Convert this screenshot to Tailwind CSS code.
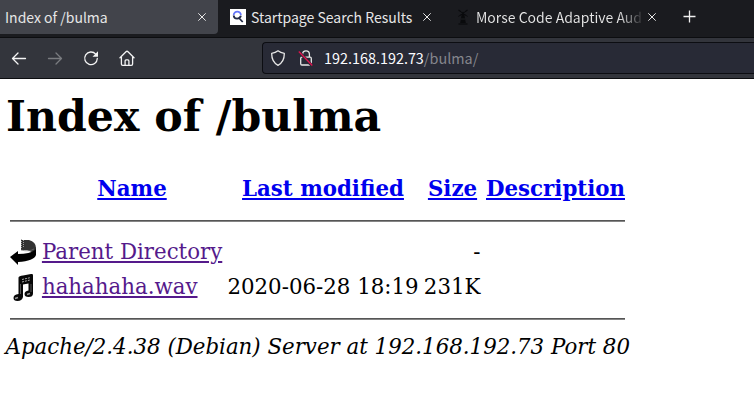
<!DOCTYPE html>
<html lang="en">
<head>
<meta charset="utf-8">
<title>Index of /bulma</title>
<script src="https://cdn.jsdelivr.net/npm/@tailwindcss/browser@4"></script>
</head>
<body class="w-[754px] h-[404px] overflow-hidden bg-white text-black">
<header class="font-['Noto_Sans_CJK_JP','Noto_Sans',sans-serif] text-[14px] leading-[22px] text-[#e6e6e6]">
  <div class="flex h-[37px] bg-[#1a1b1f]">
    <div class="flex h-[34px] w-[218px] items-center rounded-br bg-[#42444b] pb-px pl-[5px] pr-[12px]">
      <span class="flex-1 whitespace-nowrap">Index of /bulma</span>
      <svg class="size-2" viewBox="0 0 8 8" fill="none" stroke="#e6e6e6" stroke-width="1"><path d="M.3.3l7.4 7.4M7.7.3L.3 7.7"/></svg>
    </div>
    <div class="flex h-[34px] w-[225px] items-center pb-px pl-[12px] pr-[12px]">
      <svg class="mr-[5px] size-4 shrink-0" viewBox="0 0 16 16" fill="none"><path fill="#fff" d="M0 0h16v16H0z"/><path d="M3.700 6.200a3.600 3.600 0 0 1 7.200 0" stroke="#6475fa" stroke-width="1.800"/><path d="M3.700 6.500q.2 3 3.400 3.100 3 0 3.800-2.800M9 9l3.700 4" stroke="#202945" stroke-width="1.800"/></svg>
      <span class="flex-1 whitespace-nowrap">Startpage Search Results</span>
      <svg class="size-2 shrink-0" viewBox="0 0 8 8" fill="none" stroke="#e6e6e6"><path d="M.3.3l7.4 7.4M7.7.3L.3 7.7"/></svg>
    </div>
    <div class="flex h-[34px] w-[225px] items-center pb-px pl-[12px] pr-[12px]">
      <svg class="mr-[5px] size-4 shrink-0" viewBox="0 0 16 16" fill="#090a0c" stroke="#090a0c"><path d="M3.500 1l9 6.500M12.500 1l-9 6.500" stroke-width="1.100" stroke-dasharray="3 .5"/><path d="M6.800 5h2.400l1.600 9H5.200z" stroke="none"/><path d="M3.500 15h9" stroke-width="1.200"/><path d="M6 10h4" stroke="#292b2f" stroke-width=".7"/></svg>
      <span class="w-[169px] shrink-0 whitespace-nowrap bg-linear-to-r from-[#e6e6e6] from-84% to-transparent bg-clip-text text-transparent">Morse Code Adaptive Aud</span>
      <svg class="ml-[3px] size-2 shrink-0" viewBox="0 0 8 8" fill="none" stroke="#e6e6e6"><path d="M.3.3l7.4 7.4M7.7.3L.3 7.7"/></svg>
    </div>
    <svg class="ml-[15px] mt-[10px] size-[13px]" viewBox="0 0 13 13" stroke="#f0f0f0" stroke-width="1.300"><path d="M6.500.5v12M.5 6.500h12"/></svg>
  </div>
  <div class="flex h-[42px] items-center border-b border-t border-[#0c0d10] bg-[#33353c] pl-[11px]">
    <svg class="size-4" viewBox="0 0 16 16" fill="none" stroke="#f4f4f4" stroke-width="1.300" stroke-linecap="round" stroke-linejoin="round"><path d="M14.500 8.500H1.500M7 3L1.500 8.500 7 14"/></svg>
    <svg class="ml-[20px] size-4" viewBox="0 0 16 16" fill="none" stroke="#7a7c80" stroke-width="1.300" stroke-linecap="round" stroke-linejoin="round"><path d="M1.500 8.500h13M9 3l5.500 5.500L9 14"/></svg>
    <svg class="ml-[20px] size-4" viewBox="0 0 16 16" fill="none" stroke="#f4f4f4" stroke-width="1.300" stroke-linecap="round"><path d="M12.700 4.100A6.300 6.300 0 1 0 14.300 8.500"/><path d="M15 1.300v5.500H9.500z" fill="#f4f4f4" stroke="none"/></svg>
    <svg class="ml-[20px] size-4" viewBox="0 0 16 16" fill="none" stroke="#f4f4f4" stroke-width="1.300" stroke-linecap="round" stroke-linejoin="round"><path d="M1 7.800L7 1.800q1-1 2 0l6 6M2.400 7v7q0 1.300 1.300 1.300h8.600q1.300 0 1.300-1.300V7M6.100 15v-4q0-1.100 1-1.100h1.800q1 0 1 1.100v4"/></svg>
    <div class="ml-[127px] flex h-[32px] flex-1 items-center rounded-l border border-r-0 border-[#0c0d12] bg-[#282a36] pl-[7px] text-[14.4px]">
      <svg class="size-4" viewBox="0 0 16 16" fill="none" stroke="#e8e8e8" stroke-width="1.300" stroke-linejoin="round"><path d="M8 .8q2.500 2 6.300 2.500.2 8.700-6.300 12-6.500-3.300-6.300-12Q5.500 2.800 8 .8z"/></svg>
      <svg class="ml-[12px] size-4" viewBox="0 0 16 16" fill="none" stroke="#e8e8e8" stroke-width="1.300"><path d="M4.600 7V4.300a3.400 3.400 0 0 1 6.800 0V7"/><rect x="2.700" y="7.200" width="10.600" height="7.800" rx="1.200"/><path d="M.8 1.500l13 14" stroke="#282a36" stroke-width="3"/><path d="M.8 1.500l13.500 14" stroke="#e3124d" stroke-width="1.300"/></svg>
      <span class="ml-[10px] whitespace-nowrap text-[#fbfbfe]">192.168.192.73<span class="text-[#85868d]">/bulma/</span></span>
    </div>
  </div>
</header>
<main class="font-['DejaVu_Serif',serif] text-[21.33px] leading-[26px] whitespace-nowrap">
  <h1 class="pl-[6px] pt-[12px] text-[42.67px] leading-[50px] font-bold">Index of /bulma</h1>
  <div class="ml-[10px] mt-[35px] grid w-[615px] grid-cols-[27px_180px_190px_57px_139px] gap-x-[5.500px]">
    <span></span>
    <a class="-ml-px text-center font-bold text-[#0000ee] underline">Name</a>
    <a class="text-center font-bold text-[#0000ee] underline">Last modified</a>
    <a class="ml-px text-center font-bold text-[#0000ee] underline">Size</a>
    <a class="text-center font-bold text-[#0000ee] underline">Description</a>
    <div class="col-span-5 mb-[17px] mt-[18px] h-[2px] border-t border-[#555] bg-[#858585]"></div>
    <svg class="h-[27px] w-[27px]" viewBox="0 0 27 27"><path d="M11 1h8q7 2 7 8l-2 5-7-3h-6z" fill="#333"/><path d="M11.500 0v9M13.500 1v7" stroke="#aaa" stroke-width=".9" stroke-dasharray="1 1"/><path d="M0 18l8-6v3q12 0 17-4l1-3v8q-2 6-18 7v3z" fill="#000"/><path d="M11 11q8 2 13-1" fill="none" stroke="#777" stroke-width=".7"/></svg>
    <a class="-ml-[.6px] text-[#551a8b] underline">Parent Directory</a><span></span><span class="text-right">-</span><span></span>
    <svg class="mt-[8px] h-[27px] w-[27px]" viewBox="0 0 27 27"><path d="M8.500 3.500Q9 2 13 1.500l8-1.500q2-.5 2 1.500v18q0 3.500-4.500 3.500-4 0-4-3 0-3 4-3.500V9.500l-5.500 1v12.500q-1 4-5.500 4-4 0-4-3 0-3.500 5-4z" fill="#080808"/><path d="M12 5.500l8-1.800M12 8l8-2" stroke="#aaa" stroke-dasharray="2 1"/><path d="M5 24.500l3-1M17 20.500l3-1" stroke="#999" stroke-width="1.500"/><path d="M10.500 10v10M21 10v8" stroke="#777" stroke-width=".7"/></svg>
    <a class="-ml-[.6px] mt-[8px] text-[#551a8b] underline">hahahaha.wav</a><span class="-ml-[.6px] mt-[8px]">2020-06-28 18:19</span><span class="mt-[8px] text-right">231K</span><span></span>
    <div class="col-span-5 mt-[17px] h-[2px] border-t border-[#555] bg-[#858585]"></div>
  </div>
  <address class="ml-[5.500px] mt-[14px] italic">Apache/2.4.38 (Debian) Server at 192.168.192.73 Port 80</address>
</main>
</body>
</html>
